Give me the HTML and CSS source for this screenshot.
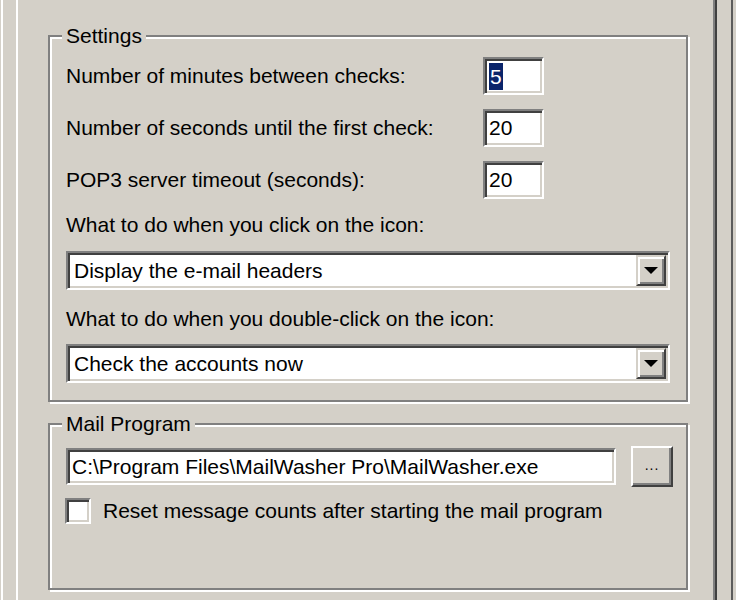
FILE: index.html
```html
<!DOCTYPE html>
<html>
<head>
<meta charset="utf-8">
<link rel="stylesheet" href="styles.css">
</head>
<body>
<div class="frame">
  <div class="page">
    <fieldset class="group settings">
      <legend>Settings</legend>
      <div class="row">
        <span class="lbl">Number of minutes between checks:</span>
        <div class="edit num"><span class="sel">5</span></div>
      </div>
      <div class="row">
        <span class="lbl">Number of seconds until the first check:</span>
        <div class="edit num">20</div>
      </div>
      <div class="row">
        <span class="lbl">POP3 server timeout (seconds):</span>
        <div class="edit num">20</div>
      </div>
      <div class="caption cap1">What to do when you click on the icon:</div>
      <div class="combo c1">
        <span class="combo-text">Display the e-mail headers</span>
        <span class="drop"><svg width="14" height="8" viewBox="0 0 14 8"><path d="M0 0H14L7 7Z" fill="#000"/></svg></span>
      </div>
      <div class="caption cap2">What to do when you double-click on the icon:</div>
      <div class="combo c2">
        <span class="combo-text">Check the accounts now</span>
        <span class="drop"><svg width="14" height="8" viewBox="0 0 14 8"><path d="M0 0H14L7 7Z" fill="#000"/></svg></span>
      </div>
    </fieldset>
    <fieldset class="group mail">
      <legend>Mail Program</legend>
      <div class="path-row">
        <div class="edit path">C:\Program Files\MailWasher Pro\MailWasher.exe</div>
        <div class="btn">...</div>
      </div>
      <div class="check-row">
        <span class="checkbox"></span>
        <span class="check-lbl">Reset message counts after starting the mail program</span>
      </div>
    </fieldset>
  </div>
</div>
</body>
</html>
```

FILE: styles.css
```css
html, body {
  margin: 0;
  padding: 0;
}
body {
  width: 736px;
  height: 600px;
  overflow: hidden;
  background: #d4d0c8;
  font-family: "Liberation Sans", Arial, sans-serif;
  font-size: 21px;
  color: #000;
}
.frame {
  margin-left: 1px;
  margin-right: 3px;
  height: 600px;
  border-left: 2px solid #ffffff;
  border-right: 2px solid #5c5c5c;
  padding-left: 13px;
  box-sizing: border-box;
}
.page {
  height: 600px;
  margin-right: 14px;
  border-left: 2px solid #ffffff;
  border-right: 2px solid #404040;
  box-shadow: inset -2px 0 0 #808080;
  padding: 0 27px 0 30px;
  box-sizing: border-box;
  padding-top: 25px;
}
.group {
  margin: 0;
  border: 2px solid #808080;
  box-shadow: inset 2px 2px 0 #ffffff, 2px 2px 0 #ffffff;
  padding: 0 16px;
  min-width: 0;
}
.group legend {
  padding: 0 4px;
  margin-left: -4px;
  line-height: 22px;
  height: 22px;
  background: #d4d0c8;
}
.settings {
  padding-top: 10px;
  padding-bottom: 17px;
}
.row {
  display: flex;
  align-items: center;
  height: 38px;
  margin-bottom: 14px;
}
.row:nth-of-type(3) {
  margin-bottom: 0;
}
.lbl {
  width: 417px;
  flex: none;
}
.edit {
  background: #fff;
  border: 2px solid;
  border-color: #808080 #ffffff #ffffff #808080;
  box-shadow: inset 2px 2px 0 #404040, inset -2px -2px 0 #d4d0c8;
  box-sizing: border-box;
  display: flex;
  align-items: center;
  white-space: nowrap;
  overflow: hidden;
}
.num {
  width: 61px;
  height: 38px;
  padding-left: 4px;
}
.sel {
  background: #0a246a;
  color: #fff;
  line-height: 27px;
  padding: 0 1px;
}
.caption {
  line-height: 24px;
  height: 24px;
}
.cap1 {
  margin-top: 14px;
  margin-bottom: 14px;
}
.cap2 {
  margin-top: 17px;
  margin-bottom: 13px;
}
.combo {
  height: 39px;
  background: #fff;
  border: 2px solid;
  border-color: #808080 #ffffff #ffffff #808080;
  box-shadow: inset 2px 2px 0 #404040, inset -2px -2px 0 #d4d0c8;
  box-sizing: border-box;
  display: flex;
  align-items: stretch;
  padding: 2px;
}
.combo-text {
  flex: 1;
  display: flex;
  align-items: center;
  padding-left: 4px;
}
.drop {
  width: 30px;
  flex: none;
  background: #d4d0c8;
  border: 2px solid;
  border-color: #d4d0c8 #404040 #404040 #d4d0c8;
  box-shadow: inset 2px 2px 0 #ffffff, inset -2px -2px 0 #808080;
  box-sizing: border-box;
  display: flex;
  align-items: center;
  justify-content: center;
}
.drop svg {
  display: block;
}
.mail {
  margin-top: 11px;
  padding-top: 11px;
  padding-right: 12px;
  padding-bottom: 64px;
}
.path-row {
  display: flex;
  align-items: center;
  height: 41px;
  gap: 15px;
}
.path {
  width: 550px;
  flex: none;
  height: 37px;
  padding-left: 4px;
}
.btn {
  width: 42px;
  height: 41px;
  flex: none;
  background: #d4d0c8;
  border: 2px solid;
  border-color: #ffffff #404040 #404040 #ffffff;
  box-shadow: inset -2px -2px 0 #808080;
  box-sizing: border-box;
  display: flex;
  align-items: center;
  justify-content: center;
  font-size: 14px;
  letter-spacing: 1px;
  padding-bottom: 4px;
}
.check-row {
  display: flex;
  align-items: center;
  margin-top: 11px;
  height: 26px;
}
.checkbox {
  width: 26px;
  height: 26px;
  flex: none;
  background: #fff;
  border: 2px solid;
  border-color: #808080 #ffffff #ffffff #808080;
  box-shadow: inset 2px 2px 0 #404040, inset -2px -2px 0 #d4d0c8;
  box-sizing: border-box;
  margin-left: -1px;
}
.check-lbl {
  margin-left: 12px;
}
```
